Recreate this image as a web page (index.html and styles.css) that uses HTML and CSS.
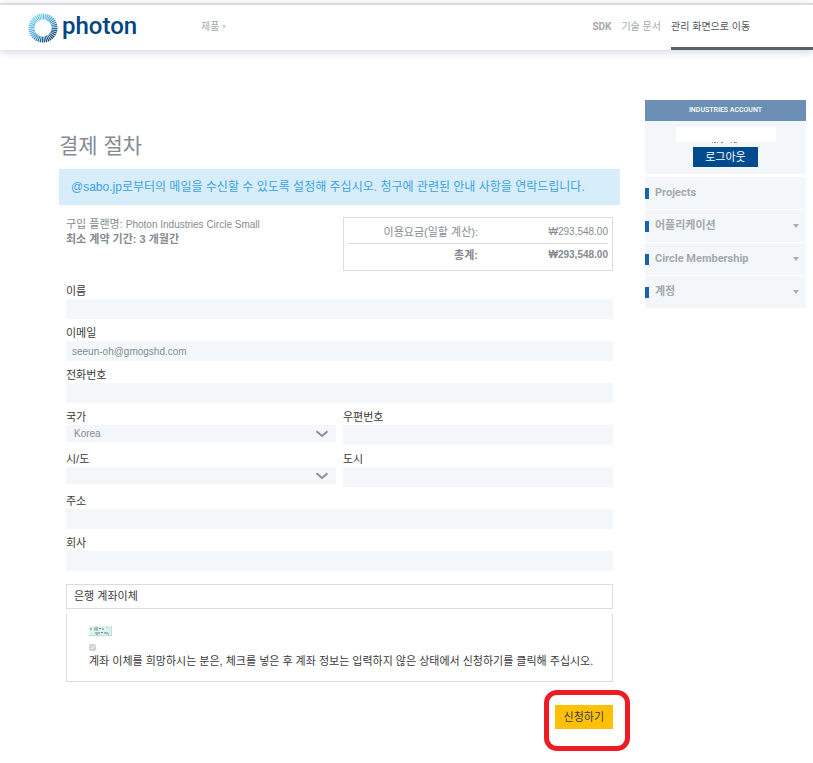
FILE: index.html
```html
<!DOCTYPE html>
<html lang="ko">
<head>
    <meta charset="UTF-8">
    <meta name="viewport" content="width=device-width, initial-scale=1.0">
    <title>결제 절차 | Photon</title>
    <link rel="stylesheet" href="styles.css">
</head>
<body>
    <header class="header">
        <a class="logo" href="#">
            <svg class="logo-mark" width="30" height="30" viewBox="0 0 30 30" aria-hidden="true">
                <defs>
                    <linearGradient id="ring" gradientUnits="userSpaceOnUse" x1="5" y1="4" x2="24" y2="27">
                        <stop offset="0" stop-color="#74d8fa"/>
                        <stop offset="0.5" stop-color="#3d9fce"/>
                        <stop offset="1" stop-color="#002e63"/>
                    </linearGradient>
                </defs>
                <circle cx="15" cy="15" r="11.5" fill="none" stroke="url(#ring)" stroke-width="6" pathLength="80" stroke-dasharray="1.3 0.7"/>
            </svg>
            <span class="logo-text">photon</span>
        </a>
        <nav class="nav-main">
            <a href="#">제품 <span class="caret"></span></a>
        </nav>
        <nav class="nav-side">
            <a class="latin" href="#">SDK</a>
            <a href="#">기술 문서</a>
            <a class="active" href="#">관리 화면으로 이동</a>
        </nav>
    </header>

    <div class="page">
        <main class="content">
            <h1>결제 절차</h1>
            <div class="notice">@sabo.jp로부터의 메일을 수신할 수 있도록 설정해 주십시오. 청구에 관련된 안내 사항을 연락드립니다.</div>

            <form class="checkout">
                <div class="summary">
                    <div class="plan">
                        <div>구입 플랜명: <span class="plan-name">Photon Industries Circle Small</span></div>
                        <div class="term">최소 계약 기간: 3 개월간</div>
                    </div>
                    <div class="price-box">
                        <table class="price">
                            <tr>
                                <th>이용요금(일할 계산):</th>
                                <td>₩293,548.00</td>
                            </tr>
                            <tr class="total">
                                <th>총계:</th>
                                <td>₩293,548.00</td>
                            </tr>
                        </table>
                    </div>
                </div>

                <div class="fields">
                    <div class="field wide">
                        <label for="name">이름</label>
                        <input type="text" id="name" name="name">
                    </div>
                    <div class="field wide">
                        <label for="email">이메일</label>
                        <input type="email" id="email" name="email" value="seeun-oh@gmogshd.com">
                    </div>
                    <div class="field wide">
                        <label for="phone">전화번호</label>
                        <input type="tel" id="phone" name="phone">
                    </div>
                    <div class="field">
                        <label for="country">국가</label>
                        <select id="country" name="country">
                            <option>Korea</option>
                        </select>
                    </div>
                    <div class="field">
                        <label for="zip">우편번호</label>
                        <input type="text" id="zip" name="zip">
                    </div>
                    <div class="field">
                        <label for="state">시/도</label>
                        <select id="state" name="state">
                            <option></option>
                        </select>
                    </div>
                    <div class="field">
                        <label for="city">도시</label>
                        <input type="text" id="city" name="city">
                    </div>
                    <div class="field wide">
                        <label for="address">주소</label>
                        <input type="text" id="address" name="address">
                    </div>
                    <div class="field wide">
                        <label for="company">회사</label>
                        <input type="text" id="company" name="company">
                    </div>
                </div>

                <div class="bank-title">은행 계좌이체</div>
                <div class="bank-body">
                    <svg class="bank-card" width="23" height="10" viewBox="0 0 23 10" aria-hidden="true">
                        <rect width="23" height="10" fill="#dff3ee"/>
                        <path d="M0 9.5H23M22.5 0V10" stroke="#c3ddd8"/>
                        <path d="M1 3h2M6 1.500v3M7 2h2M7 4h2M10 2.500h2M13 3h2M6 7h1M8 6v3M9 7h2M12 6.500h2M15 7h2M18 6v2M19 8h1" stroke="#4f8493"/>
                        <path d="M17 2l2 -1M20 3h1" stroke="#a3c9c6"/>
                    </svg>
                    <input type="checkbox" id="transfer" name="transfer" checked disabled>
                    <label for="transfer">계좌 이체를 희망하시는 분은, 체크를 넣은 후 계좌 정보는 입력하지 않은 상태에서 신청하기를 클릭해 주십시오.</label>
                </div>

                <div class="actions">
                    <button class="submit" type="submit">신청하기</button>
                </div>
            </form>
        </main>

        <aside class="sidebar">
            <div class="account-title">INDUSTRIES ACCOUNT</div>
            <div class="account">
                <div class="account-name"></div>
                <svg class="account-trace" width="28" height="1" viewBox="0 0 28 1" aria-hidden="true">
                    <path d="M0 .5h28" stroke="#7796b8" stroke-dasharray="1 1 2 1 1 3 2 8 1 2 3 3"/>
                </svg>
                <button class="logout" type="button">로그아웃</button>
            </div>
            <nav class="menu">
                <a href="#">Projects</a>
                <a href="#">어플리케이션 <span class="caret"></span></a>
                <a href="#">Circle Membership <span class="caret"></span></a>
                <a href="#">계정 <span class="caret"></span></a>
            </nav>
        </aside>
    </div>
</body>
</html>
```
FILE: styles.css
```css
* {
    box-sizing: border-box;
}
body {
    margin: 0;
    padding-top: 3px;
    background: #fff;
    color: #868b91;
    font-family: "Liberation Sans", "Noto Sans CJK KR", sans-serif;
    font-size: 11px;
    line-height: 14px;
}
a {
    color: inherit;
    text-decoration: none;
}
.caret {
    display: inline-block;
    border: 3px solid transparent;
    border-top: 4px solid #a9aeb5;
    border-bottom: 0;
}

/* header */
.header {
    display: flex;
    height: 47px;
    padding-left: 28px;
    border-top: 2px solid #dcdcdc;
    box-shadow: 0 2px 8px #d3d5e3;
}
.logo {
    display: flex;
    align-items: center;
    gap: 4px;
    width: 173px;
}
.logo-text {
    color: #004480;
    font-family: Roboto, sans-serif;
    font-size: 24px;
    font-weight: 500;
    line-height: 30px;
    padding-bottom: 4px;
}
.nav-main,
.nav-side {
    display: flex;
    color: #a4a9b0;
    font-size: 10px;
    line-height: 44px;
}
.nav-main .caret {
    border-width: 4px 2px 0;
    border-top-color: #c9ccd0;
    vertical-align: 1px;
}
.nav-side {
    gap: 10px;
    margin-left: auto;
}
.nav-side .latin {
    font-family: Roboto, sans-serif;
    font-weight: bold;
}
.nav-side .active {
    width: 142px;
    border-bottom: 3px solid #5a5f69;
    color: #50555c;
}

/* page */
.page {
    display: flex;
    align-items: flex-start;
    gap: 25px;
    padding: 50px 7px 34px 59px;
}
.content {
    flex: 1;
    min-width: 0;
}
h1 {
    margin: 31px 0 8px;
    font-size: 21px;
    font-weight: normal;
    line-height: 30px;
}
.notice {
    padding: 0 12px;
    background: #d8edfa;
    color: #3ba4e4;
    font-size: 12px;
    line-height: 36px;
    white-space: nowrap;
}
.checkout {
    padding: 12px 7px 0;
}
.summary,
.fields {
    display: grid;
    grid-template-columns: 1fr 1fr;
    column-gap: 7px;
}
.plan {
    white-space: nowrap;
}
.plan-name {
    font-size: 10px;
}
.term {
    font-weight: bold;
}
.price-box {
    height: 54px;
    padding: 3px 4px;
    border: 1px solid #dcdcdc;
}
.price {
    width: 100%;
    border-collapse: collapse;
    line-height: 22px;
}
.price th,
.price td {
    padding: 0;
    font-weight: normal;
    text-align: right;
}
.price th {
    width: 50%;
}
.price td {
    font-size: 10px;
}
.price .total {
    border-top: 1px solid #dcdcdc;
}
.price .total th,
.price .total td {
    font-weight: bold;
}

/* form */
.fields {
    margin: 6px 0 13px;
}
.wide {
    grid-column: span 2;
}
.field label {
    display: block;
    padding-top: 7px;
    color: #3a3a3a;
    line-height: 15px;
}
.field input,
.field select {
    display: block;
    width: 100%;
    height: 20px;
    padding: 0 6px;
    border: 0;
    border-radius: 0;
    background: #f3f7fa;
    color: #868b91;
    font-family: inherit;
    font-size: 10px;
}
.field select {
    height: 17px;
    padding: 0 8px;
    appearance: none;
    background: #f3f7fa url("data:image/svg+xml,%3Csvg xmlns='http://www.w3.org/2000/svg' width='14' height='8'%3E%3Cpath d='M1.500 1.200L7 6L12.500 1.200' fill='none' stroke='%238b9097' stroke-width='2'/%3E%3C/svg%3E") no-repeat right 7px center;
}
.bank-title {
    margin-bottom: 5px;
    padding: 0 7px;
    border: 1px solid #dcdcdc;
    color: #3a3a3a;
    line-height: 23px;
}
.bank-body {
    height: 68px;
    padding: 12px 22px 0;
    border: 1px solid #dcdcdc;
    border-top: 0;
    color: #3a3a3a;
    white-space: nowrap;
}
.bank-card {
    display: block;
}
.bank-body input {
    display: block;
    width: 7px;
    height: 7px;
    margin: 8px 0 3px;
}
.bank-body label {
    display: block;
}
.actions {
    display: flex;
    justify-content: flex-end;
    padding-top: 23px;
}
.submit {
    position: relative;
    padding: 0 9px;
    border: 0;
    background: #ffc107;
    color: #3a3a3a;
    font-family: inherit;
    font-size: 11px;
    line-height: 24px;
}
.submit::after {
    content: "";
    position: absolute;
    inset: -15px -17px -22px -11px;
    border: 5px solid #ed1c24;
    border-radius: 13px;
}

/* sidebar */
.sidebar {
    flex: 0 0 161px;
}
.account-title {
    background: #6b8fb5;
    color: #fff;
    font-family: Roboto, sans-serif;
    font-size: 7px;
    font-weight: 500;
    line-height: 21px;
    text-align: center;
}
.account {
    display: flex;
    flex-direction: column;
    align-items: center;
    height: 53px;
    padding-top: 6px;
    margin-bottom: 3px;
    background: #f3f7fa;
}
.account-name {
    width: 100px;
    height: 15px;
    background: #fff;
}
.account-trace {
    margin-bottom: 4px;
}
.logout {
    width: 65px;
    padding: 0;
    border: 0;
    background: #004b8d;
    color: #fff;
    font-family: inherit;
    font-size: 11px;
    line-height: 20px;
}
.menu a {
    display: flex;
    align-items: center;
    height: 32px;
    margin-bottom: 1px;
    padding-right: 7px;
    background: #f3f7fa;
    color: #a4a9b0;
    font-family: Roboto, "Noto Sans CJK KR", sans-serif;
    font-weight: bold;
    line-height: 16px;
}
.menu a::before {
    content: "";
    width: 4px;
    height: 11px;
    margin-right: 6px;
    background: #1762b5;
}
.menu .caret {
    margin-left: auto;
}
```
